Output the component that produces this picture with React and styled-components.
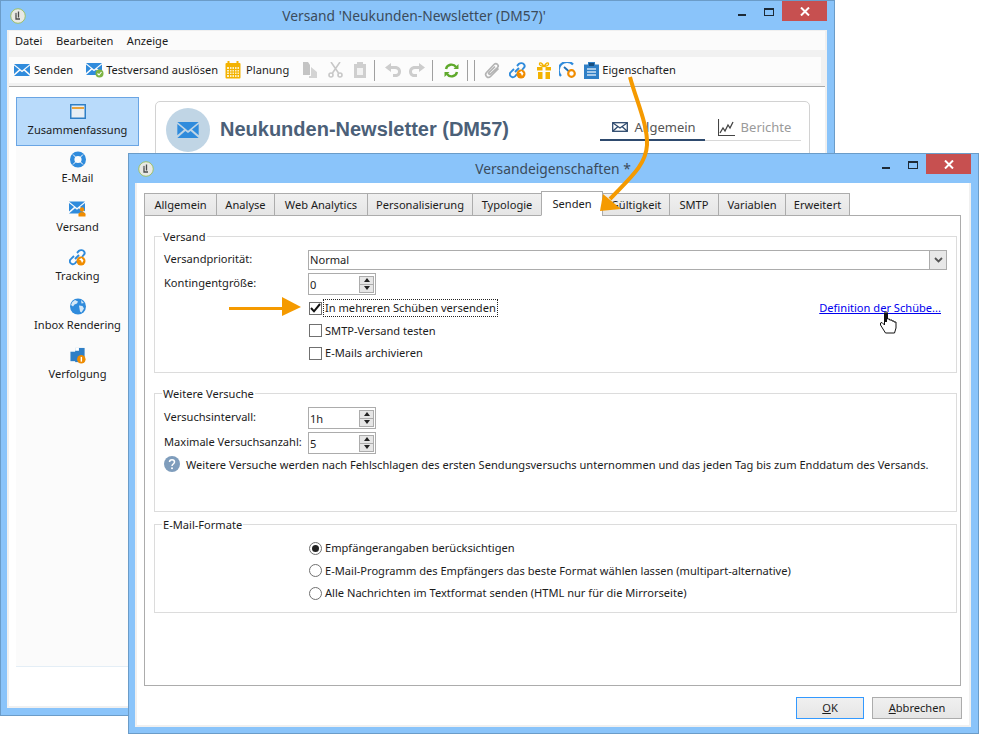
import React from "react";
import styled, { createGlobalStyle } from "styled-components";

const Global = createGlobalStyle`
  html, body { margin: 0; padding: 0; background: #fff; }
  body { font-family: "Noto Sans", "Open Sans", sans-serif; font-size: 11.1px; color: #1c1c1c; }
  * { box-sizing: border-box; }
`;

const Desktop = styled.div`position: relative; width: 1000px; height: 751px; overflow: hidden; background: #fff;`;
const Win = styled.div`
  position: absolute;
  left: ${p => p.$x}px; top: ${p => p.$y}px; width: ${p => p.$w}px; height: ${p => p.$h}px;
  background: #8ac4fa; border: 1px solid #6b9cc8;
  display: flex; flex-direction: column;
`;
const TitleBar = styled.div`display: flex; align-items: flex-start; height: ${p => p.$h}px; flex: none;`;
const AppIcon = styled.div`flex: none; margin: 7px 0 0 9px; width: 16px; height: 16px;`;
const Title = styled.div`
  flex: 1; text-align: center; padding-left: ${p => p.$indent}px; line-height: 29px;
  font-size: 13.8px; color: #3b4b5b; white-space: nowrap;
`;
const Controls = styled.div`flex: none; display: flex; align-items: flex-start; margin-right: 7px;`;
const CtlMin = styled.div`width: 8px; height: 2px; background: #1d2a36; margin: 13px 18px 0 0;`;
const CtlMax = styled.div`width: 10px; height: 8px; border: 1px solid #1d2a36; border-top-width: 2px; margin: 7px 8px 0 0;`;
const CtlClose = styled.div`
  width: 45px; height: 20px; background: #c75050; display: flex; align-items: center; justify-content: center;
`;
const Client = styled.div`
  flex: 1; min-height: 0; margin: 0 7px 7px 6px; background: #fff; border: 2px solid #f0f0f0; border-top-width: 1px;
  display: flex; flex-direction: column; overflow: hidden;
`;
const MenuBar = styled.div`display: flex; height: 19px; background: #fbfbfb; padding-left: 6px; gap: 13.5px; line-height: 20px; flex: none;`;
const MenuItem = styled.span``;
const ToolStrip = styled.div`
  flex: none; height: 37px; background: #f1f1f1; padding-top: 7px; border-bottom: 1px solid #a9a9a9;
`;
const ToolRow = styled.div`
  display: flex; align-items: center; height: 26px; background: #fcfcfc; padding-left: 5px; margin-right: 4px;
`;
const ToolItem = styled.div`
  display: flex; align-items: center; margin-left: ${p => p.$ml || 0}px; line-height: 26px; white-space: nowrap; flex: none;
  svg { display: block; }
`;
const ToolText = styled.span`margin-left: ${p => p.$ml || 4}px;`;
const ToolSep = styled.div`width: 1px; height: 21px; background: #a0a0a0; margin-left: ${p => p.$ml}px; flex: none;`;
const Body = styled.div`flex: 1; display: flex; min-height: 0; padding: 10px 0 0 7px;`;
const Sidebar = styled.div`
  width: 123px; height: 570px; background: #fbfbfb; border-bottom: 1px solid #e4eef6; flex: none;
  display: flex; flex-direction: column;
`;
const SideItem = styled.div`
  height: 49px; display: flex; flex-direction: column; align-items: center; padding-top: 5px;
  flex: none; margin-bottom: ${p => p.$active ? -1 : 0}px;
  background: ${p => p.$active ? "#b9dbfb" : "transparent"};
  border: 1px solid ${p => p.$active ? "#6aa5e4" : "transparent"};
  svg { display: block; height: 17px; }
`;
const SideLabel = styled.div`margin-top: 1px; line-height: 17px; white-space: nowrap;`;
const Card = styled.div`
  margin-left: 16px; width: 655px; height: 200px; border: 1px solid #d2d2d2; border-radius: 5px; padding: 6px 8px 0 10px;
  display: flex; align-items: flex-start; flex: none; margin-top: 4px;
`;
const Avatar = styled.div`
  width: 44px; height: 44px; border-radius: 50%; background: #c0d5e5; display: flex; align-items: center; justify-content: center; flex: none;
`;
const CardTitle = styled.div`
  font-family: "Liberation Sans", Arial, sans-serif; font-weight: 700; font-size: 20px; color: #4b6078;
  margin-left: 10px; line-height: 42px; flex: 1; white-space: nowrap;
`;
const CardTabs = styled.div`display: flex; flex: none; margin-top: 6px;`;
const CardTab = styled.div`
  width: ${p => p.$w}px; height: 27px; display: flex; align-items: center; justify-content: center; gap: 6px;
  padding-left: 3px;
  font-size: 13px; color: ${p => p.$active ? "#555" : "#9a9a9a"};
  border-bottom: ${p => p.$active ? "2px solid #2e4a6e" : "1px solid #d8d8d8"};
`;

const DlgClient = styled(Client)`padding: 8px 8px 0 7px; border-top-width: 0; margin-bottom: 6px;`;
const Tabs = styled.div`display: flex; align-items: flex-end; height: 25px; flex: none; position: relative; z-index: 1; margin-bottom: -1px;`;
const Tab = styled.div`
  width: ${p => p.$w}px; height: ${p => p.$active ? 25 : 23}px; flex: none; margin-left: -1px;
  text-align: center; line-height: ${p => p.$active ? 24 : 22}px;
  border: 1px solid #acacac;
  border-bottom: ${p => p.$active ? "1px solid #fff" : "1px solid #acacac"};
  background: ${p => p.$active ? "#fff" : "linear-gradient(#f0f0f0, #e5e5e5)"};
  &:first-child { margin-left: 0; }
`;
const Panel = styled.div`
  height: 471px; border: 1px solid #acacac; padding: 12px 3px 0 9px; flex: none;
`;
const Group = styled.fieldset`
  margin: ${p => p.$mt || 0}px 0 0; padding: ${p => p.$pt}px 9px 0 9px; border: 1px solid #dcdcdc; height: ${p => p.$h}px; min-width: 0;
`;
const Legend = styled.legend`margin-left: -2px; padding: 0 1px; line-height: 16px; position: relative; top: 1px;`;
const FieldRow = styled.div`
  display: grid; grid-template-columns: 144px 1fr; align-items: center;
  margin-bottom: ${p => p.$mb ?? 3}px;
`;
const Label = styled.div`white-space: nowrap; margin-top: -4px;`;
const Select = styled.div`
  height: 20px; border: 1px solid #acacac; display: flex; justify-content: space-between; align-items: stretch; padding-left: 1px; line-height: 18px;
`;
const SelectBtn = styled.div`
  width: 17px; background: #e8e8e8; border-left: 1px solid #acacac; display: flex; align-items: center; justify-content: center;
`;
const Spin = styled.div`
  width: 68px; height: 22px; border: 1px solid #acacac; display: flex; justify-content: space-between; align-items: center; padding: 0 1px 0 1px;
`;
const SpinBtns = styled.div`
  width: 15px; height: 17px; border: 1px solid #acacac; background: #e6e6e6; display: flex; flex-direction: column;
`;
const SpinBtn = styled.div`
  flex: 1; display: flex; align-items: center; justify-content: center;
  & + & { border-top: 1px solid #acacac; }
  &::before {
    content: ""; width: 0; height: 0; border-left: 3px solid transparent; border-right: 3px solid transparent;
    ${p => p.$down ? "border-top: 4px solid #222;" : "border-bottom: 4px solid #222;"}
  }
`;
const OptionRow = styled.div`
  display: flex; align-items: center; height: ${p => p.$h || 22.5}px; margin-left: ${p => p.$ml}px;
  justify-content: space-between; white-space: nowrap;
`;
const OptionMain = styled.div`display: flex; align-items: center;`;
const Check = styled.div`
  width: 13px; height: 13px; border: 1px solid #707070; background: #fff; display: flex; align-items: center; justify-content: center; flex: none;
`;
const Radio = styled.div`
  width: 13px; height: 13px; border: 1px solid #707070; border-radius: 50%; background: #fff; flex: none;
  display: flex; align-items: center; justify-content: center;
  &::after { content: ""; width: 7px; height: 7px; border-radius: 50%; background: ${p => p.$on ? "#222" : "transparent"}; }
`;
const OptionText = styled.span`
  margin-left: 2px; padding: 0 1px; line-height: 16px;
  outline: ${p => p.$focus ? "1px dotted #222" : "none"};
`;
const LinkText = styled.span`color: #0000ee; text-decoration: underline; margin: 0 6px 2px 0;`;
const Hint = styled.div`display: flex; align-items: center; margin: 2px 0 0 0; white-space: nowrap;`;
const HintIcon = styled.div`width: 16px; height: 16px; flex: none; margin-right: 6px;`;
const Footer = styled.div`display: flex; justify-content: flex-end; gap: 8px; padding: 11px 0 0 0; margin-right: -1px;`;
const Button = styled.div`
  width: ${p => p.$w}px; height: 22px; text-align: center; line-height: 20px;
  border: 1px solid ${p => p.$def ? "#3399ff" : "#acacac"};
  background: linear-gradient(#f0f0f0, #e5e5e5);
  u { text-decoration: underline; }
`;
const Overlay = styled.svg`position: absolute; left: 0; top: 0; z-index: 2; pointer-events: none;`;

const Logo = () => (
  <svg width="16" height="16" viewBox="0 0 16 16">
    <circle cx="8" cy="8" r="7.3" fill="#e9e9e4" stroke="#9cc06a" strokeWidth="1" />
    <path d="M8.5 3.5v6M6 7v4h4" fill="none" stroke="#4b4b4b" strokeWidth="1.3" />
    <circle cx="6" cy="6" r="1.2" fill="#8c8c8c" />
  </svg>
);
const Env = ({ c = "#2f8bdc", w = 16, h = 12 }) => (
  <svg width={w} height={h} viewBox="0 0 16 12">
    <path d="M0 0h16L8 6.5z" fill={c} />
    <path d="M0 1.5 5 5.6 0 10zM16 1.5 11 5.6l5 4.4zM0 12l6-5.3 2 1.6 2-1.6 6 5.3z" fill={c} />
  </svg>
);
const EnvBadge = ({ badge }) => (
  <svg width="18" height="16" viewBox="0 0 18 16">
    <path d="M0 1h16L8 7.5zM0 2.5 5 6.6 0 11zM16 2.5 11 6.6l5 4.4zM0 13l6-5.3 2 1.6 2-1.6 6 5.3z" fill="#2f8bdc" />
    {badge === "ok" && <><circle cx="13.5" cy="11.5" r="4" fill="#7cb342" /><path d="M11.5 11.5l1.5 1.5 2.5-3" stroke="#fff" strokeWidth="1.1" fill="none" /></>}
    {badge === "user" && <><circle cx="13" cy="9" r="2.2" fill="#f08c00" /><path d="M9.5 16v-2.2c0-1.4 1.5-2 3.5-2s3.5.6 3.5 2V16z" fill="#f08c00" /></>}
  </svg>
);
const Cal = () => (
  <svg width="16" height="18" viewBox="0 0 16 18">
    <rect x="0.5" y="2" width="15" height="15.5" rx="1" fill="#f3b200" />
    <rect x="2" y="6" width="12" height="10" fill="#fdf0c4" />
    <path d="M2 8.5h12M2 11h12M2 13.5h12M4.5 6v10M7 6v10M9.5 6v10M12 6v10" stroke="#f3b200" strokeWidth="1" />
    <path d="M3.5 0v3M12.5 0v3" stroke="#f3b200" strokeWidth="2" />
  </svg>
);
const DisCopy = () => (
  <svg width="15" height="16" viewBox="0 0 15 16"><path d="M0 0h5l2 3v10H0z" fill="#c4c4c4" /><path d="M8 5l6 5v6H6V14h2z" fill="#d4d4d4" /></svg>
);
const DisCut = () => (
  <svg width="15" height="16" viewBox="0 0 15 16" fill="none" stroke="#c8c8c8" strokeWidth="1.6">
    <path d="M3 0l7.5 11M12 0L4.5 11" /><circle cx="3" cy="13" r="2" /><circle cx="12" cy="13" r="2" />
  </svg>
);
const DisPaste = () => (
  <svg width="14" height="16" viewBox="0 0 14 16"><path d="M1 2h3V0h6v2h3v14H1z" fill="#cfcfcf" /><rect x="4" y="6" width="6" height="7" fill="#f2f2f2" /></svg>
);
const Undo = ({ flip }) => (
  <svg width="17" height="14" viewBox="0 0 17 14" transform={flip ? "scale(-1 1)" : undefined}>
    <path d="M6 0v3h4c4 0 6 2.500 6 5.500S14 14 11 14H8v-3h3c1.500 0 2-1 2-2.500S12 6 10 6H6v3L0 4.500z" fill="#cdcdcd" />
  </svg>
);
const Refresh = () => (
  <svg width="15" height="15" viewBox="0 0 15 15" fill="none" stroke="#5fa92c" strokeWidth="2.400">
    <path d="M2 6a5.600 5.600 0 0 1 10-2" /><path d="M13 9a5.600 5.600 0 0 1-10 2" />
    <path d="M14.500 1v5h-5zM.5 14V9h5z" fill="#5fa92c" stroke="none" />
  </svg>
);
const Clip = () => (
  <svg width="16" height="17" viewBox="0 0 16 17" fill="none" stroke="#b4b4b4" strokeWidth="1.700">
    <path d="M14.500 6.500 6.500 14.500c-2.500 2.500-6.500-1-4-4l7.500-8c2.500-2.500 5.500 1 3.500 3L6.500 12c-1 1-2.500-.5-1.500-1.500l6-6" />
  </svg>
);
const LinkGlobe = () => (
  <svg width="17" height="17" viewBox="0 0 17 17">
    <g fill="none" stroke="#2f8bdc" strokeWidth="1.900">
      <path d="M8 4l2-2.200c1.500-1.200 4-.8 5 .6 1 1.300.6 2.800-.3 3.600L13 8" />
      <path d="M8 12l-2 2.400c-1.500 1.300-3.500 1-4.500-.4-1-1.300-.7-3 .3-3.900L5 7" />
      <path d="M6 10l4-4" />
    </g>
    <circle cx="12" cy="12" r="4.500" fill="#f08c00" />
    <path d="M10 10.500l2 1 1 2.500 1.500-2.500-2-2.500z" fill="#fff" />
  </svg>
);
const Gift = () => (
  <svg width="16" height="17" viewBox="0 0 16 17">
    <path d="M8 4.500C6 1 4 0 3.500 1.500 3 3 5 4.500 8 4.500zM8 4.500c2-3.500 4-4.500 4.500-3 .5 1.500-1.500 3-4.500 3z" fill="none" stroke="#f3b200" strokeWidth="1.300" />
    <path d="M1 5h5.500v3.500H1zM9.500 5H15v3.500H9.500zM2 10h4.500v7H2zM9.500 10H14v7H9.500z" fill="#f3b200" />
  </svg>
);
const Gauge = () => (
  <svg width="17" height="16" viewBox="0 0 17 16">
    <path d="M2 14a7.500 7.500 0 0 1 12-11.500" fill="none" stroke="#2f8bdc" strokeWidth="2.200" />
    <path d="M5 5l5 4.500" stroke="#1f6fb5" strokeWidth="1.800" />
    <circle cx="12.500" cy="11.500" r="3.300" fill="#fff" stroke="#f08c00" strokeWidth="2.200" />
  </svg>
);
const Board = () => (
  <svg width="15" height="17" viewBox="0 0 15 17">
    <path d="M0 2.500h4V0h7v2.500h4V17H0z" fill="#2f7fc6" />
    <rect x="5" y="1" width="5" height="3" fill="#174f80" />
    <path d="M3 7h9M3 10h9M3 13h9" stroke="#cfe4f5" strokeWidth="1.300" />
  </svg>
);
const SumIcon = () => (
  <svg width="16" height="15" viewBox="0 0 16 15">
    <rect x="0.750" y="0.750" width="14.500" height="13.500" fill="#e7eef4" stroke="#2f7fc6" strokeWidth="1.500" />
    <rect x="2" y="3" width="12" height="2" fill="#e8a33c" />
  </svg>
);
const MailRing = () => (
  <svg width="16" height="17" viewBox="0 0 16 16">
    <circle cx="8" cy="8" r="5.800" fill="none" stroke="#2f8bdc" strokeWidth="4.400" />
    <path d="M3 3l3 3M13 3l-3 3M3 13l3-3M13 13l-3-3" stroke="#fff" strokeWidth="1" />
  </svg>
);
const Globe = () => (
  <svg width="16" height="17" viewBox="0 0 16 16">
    <circle cx="8" cy="8" r="8" fill="#2f8bdc" />
    <path d="M5 1.500 8 3 7 5 4.500 6 3 8 1 6.500A7 7 0 0 1 5 1.500zM9 7l3.500.5L14 10l-2.500 4L10 13l-.5-3zM11 1.500l3 3-2.500.5z" fill="#d5e8f7" />
  </svg>
);
const Track = () => (
  <svg width="16" height="18" viewBox="0 0 16 18">
    <rect x="5" y="1" width="10" height="15" fill="#2f7fc6" />
    <path d="M5 1h4v3H5z" fill="#fff" /><path d="M0 5h6v10H0z" fill="#2f7fc6" />
    <circle cx="11.500" cy="13" r="4.500" fill="#f08c00" />
    <rect x="10.800" y="10.500" width="1.500" height="5" fill="#fff" />
  </svg>
);
const Outline = () => (
  <svg width="16" height="10" viewBox="0 0 16 10" fill="none" stroke="#2e4a6e" strokeWidth="1.300">
    <rect x=".7" y=".7" width="14.600" height="8.600" /><path d="M1 1l7 5 7-5M1 9l5-4.500M15 9l-5-4.500" />
  </svg>
);
const Chart = () => (
  <svg width="17" height="17" viewBox="0 0 17 17" fill="none" stroke="#444" strokeWidth="1.100">
    <path d="M.5 0v16.500H17" /><path d="M2 14l3-5 2 3 3-6 2 3 3-6" strokeWidth="1.300" />
  </svg>
);
const XMark = () => (
  <svg width="10" height="9" viewBox="0 0 10 9"><path d="M1 .5l8 8M9 .5l-8 8" stroke="#fff" strokeWidth="2" /></svg>
);
const Chevron = () => (
  <svg width="9" height="6" viewBox="0 0 9 6"><path d="M1 1l3.500 3.500L8 1" fill="none" stroke="#555" strokeWidth="1.800" /></svg>
);
const Tick = () => (
  <svg width="11" height="10" viewBox="0 0 11 10"><path d="M1 5l3 3.300L10 1" fill="none" stroke="#111" strokeWidth="2" /></svg>
);
const Info = () => (
  <svg width="16" height="16" viewBox="0 0 16 16">
    <circle cx="8" cy="8" r="8" fill="#7f9dbc" />
    <path d="M5.500 6c0-3 5-3 5 0 0 2-2.500 2-2.500 4" fill="none" stroke="#fff" strokeWidth="1.500" />
    <circle cx="8" cy="12.300" r="1" fill="#fff" />
  </svg>
);

const Window = ({ indent, children, geom }) => (
  <Win $x={geom[0]} $y={geom[1]} $w={geom[2]} $h={geom[3]}>
    <TitleBar $h={29}>
      <AppIcon><Logo /></AppIcon>
      <Title $indent={indent}>{geom.title}</Title>
      <Controls>
        <CtlMin /><CtlMax />
        <CtlClose><XMark /></CtlClose>
      </Controls>
    </TitleBar>
    {children}
  </Win>
);

const backGeom = Object.assign([0, 0, 835, 716], { title: "Versand 'Neukunden-Newsletter (DM57)'" });
const dlgGeom = Object.assign([128, 153, 851, 581], { title: "Versandeigenschaften *" });

const sideItems = [
  ["Zusammenfassung", <SumIcon />, true],
  ["E-Mail", <MailRing />],
  ["Versand", <EnvBadge badge="user" />],
  ["Tracking", <LinkGlobe />],
  ["Inbox Rendering", <Globe />],
  ["Verfolgung", <Track />],
];
const tabs = [
  ["Allgemein", 73], ["Analyse", 59], ["Web Analytics", 94], ["Personalisierung", 106],
  ["Typologie", 70], ["Senden", 62, true], ["Gültigkeit", 68], ["SMTP", 50], ["Variablen", 68], ["Erweitert", 65],
];

const SpinBox = ({ value }) => (
  <Spin>
    <span>{value}</span>
    <SpinBtns><SpinBtn /><SpinBtn $down /></SpinBtns>
  </Spin>
);

export default function App() {
  return (
    <Desktop>
      <Global />
      <Window geom={backGeom} indent={64}>
        <Client>
          <MenuBar>
            <MenuItem>Datei</MenuItem><MenuItem>Bearbeiten</MenuItem><MenuItem>Anzeige</MenuItem>
          </MenuBar>
          <ToolStrip>
            <ToolRow>
              <ToolItem><Env /><ToolText>Senden</ToolText></ToolItem>
              <ToolItem $ml={13}><EnvBadge badge="ok" /><ToolText $ml={2}>Testversand auslösen</ToolText></ToolItem>
              <ToolItem $ml={7}><Cal /><ToolText $ml={5}>Planung</ToolText></ToolItem>
              <ToolItem $ml={14}><DisCopy /></ToolItem>
              <ToolItem $ml={10}><DisCut /></ToolItem>
              <ToolItem $ml={10}><DisPaste /></ToolItem>
              <ToolSep $ml={7} />
              <ToolItem $ml={10}><Undo /></ToolItem>
              <ToolItem $ml={6}><Undo flip /></ToolItem>
              <ToolSep $ml={7} />
              <ToolItem $ml={11}><Refresh /></ToolItem>
              <ToolSep $ml={8} />
              <ToolSep $ml={6} />
              <ToolItem $ml={9}><Clip /></ToolItem>
              <ToolItem $ml={9}><LinkGlobe /></ToolItem>
              <ToolItem $ml={10}><Gift /></ToolItem>
              <ToolItem $ml={7}><Gauge /></ToolItem>
              <ToolItem $ml={8}><Board /><ToolText $ml={3}>Eigenschaften</ToolText></ToolItem>
            </ToolRow>
          </ToolStrip>
          <Body>
            <Sidebar>
              {sideItems.map(([label, icon, active]) => (
                <SideItem key={label} $active={active}>{icon}<SideLabel>{label}</SideLabel></SideItem>
              ))}
            </Sidebar>
            <Card>
              <Avatar><Env w={22} h={16} /></Avatar>
              <CardTitle>Neukunden-Newsletter (DM57)</CardTitle>
              <CardTabs>
                <CardTab $w={105} $active><Outline />Allgemein</CardTab>
                <CardTab $w={96}><Chart />Berichte</CardTab>
              </CardTabs>
            </Card>
          </Body>
        </Client>
      </Window>

      <Window geom={dlgGeom} indent={70}>
        <DlgClient>
          <Tabs>
            {tabs.map(([t, w, a]) => <Tab key={t} $w={w} $active={a}>{t}</Tab>)}
          </Tabs>
          <Panel>
            <Group $h={145} $pt={6}>
              <Legend>Versand</Legend>
              <FieldRow>
                <Label>Versandpriorität:</Label>
                <Select><span>Normal</span><SelectBtn><Chevron /></SelectBtn></Select>
              </FieldRow>
              <FieldRow $mb={2}>
                <Label>Kontingentgröße:</Label>
                <SpinBox value="0" />
              </FieldRow>
              <OptionRow $ml={145}>
                <OptionMain><Check><Tick /></Check><OptionText $focus>In mehreren Schüben versenden</OptionText></OptionMain>
                <LinkText>Definition der Schübe...</LinkText>
              </OptionRow>
              <OptionRow $ml={145}><OptionMain><Check /><OptionText>SMTP-Versand testen</OptionText></OptionMain></OptionRow>
              <OptionRow $ml={145}><OptionMain><Check /><OptionText>E-Mails archivieren</OptionText></OptionMain></OptionRow>
            </Group>
            <Group $h={127} $mt={12} $pt={6}>
              <Legend>Weitere Versuche</Legend>
              <FieldRow>
                <Label>Versuchsintervall:</Label>
                <SpinBox value="1h" />
              </FieldRow>
              <FieldRow $mb={0}>
                <Label>Maximale Versuchsanzahl:</Label>
                <SpinBox value="5" />
              </FieldRow>
              <Hint>
                <HintIcon><Info /></HintIcon>
                Weitere Versuche werden nach Fehlschlagen des ersten Sendungsversuchs unternommen und das jeden Tag bis zum Enddatum des Versands.
              </Hint>
            </Group>
            <Group $h={97} $mt={4} $pt={5}>
              <Legend>E-Mail-Formate</Legend>
              <OptionRow $ml={145}><OptionMain><Radio $on /><OptionText>Empfängerangaben berücksichtigen</OptionText></OptionMain></OptionRow>
              <OptionRow $ml={145}><OptionMain><Radio /><OptionText>E-Mail-Programm des Empfängers das beste Format wählen lassen (multipart-alternative)</OptionText></OptionMain></OptionRow>
              <OptionRow $ml={145}><OptionMain><Radio /><OptionText>Alle Nachrichten im Textformat senden (HTML nur für die Mirrorseite)</OptionText></OptionMain></OptionRow>
            </Group>
          </Panel>
          <Footer>
            <Button $w={68} $def><u>O</u>K</Button>
            <Button $w={90}><u>A</u>bbrechen</Button>
          </Footer>
        </DlgClient>
      </Window>

      <Overlay width="1000" height="751" viewBox="0 0 1000 751">
        <path d="M630 77C636 100 648 125 647 145C646 165 630 178 610 199" fill="none" stroke="#f59a00" strokeWidth="4" />
        <path d="M600 211L603 194L621 209Z" fill="#f59a00" />
        <path d="M229 308.500H284" stroke="#f59a00" strokeWidth="3" fill="none" />
        <path d="M282 297L301 307L282 316Z" fill="#f59a00" />
        <path d="M884.500 313C884.500 311.500 887.500 311.500 887.500 313V319H889.500V320H892V321H894V322H896V328L894.500 333H885.500L880.500 325V323L882 322.500L884.500 325Z" fill="#fff" stroke="#111" strokeWidth="1" />
        <path d="M886 313V322" stroke="#111" strokeWidth="2" />
      </Overlay>
    </Desktop>
  );
}
